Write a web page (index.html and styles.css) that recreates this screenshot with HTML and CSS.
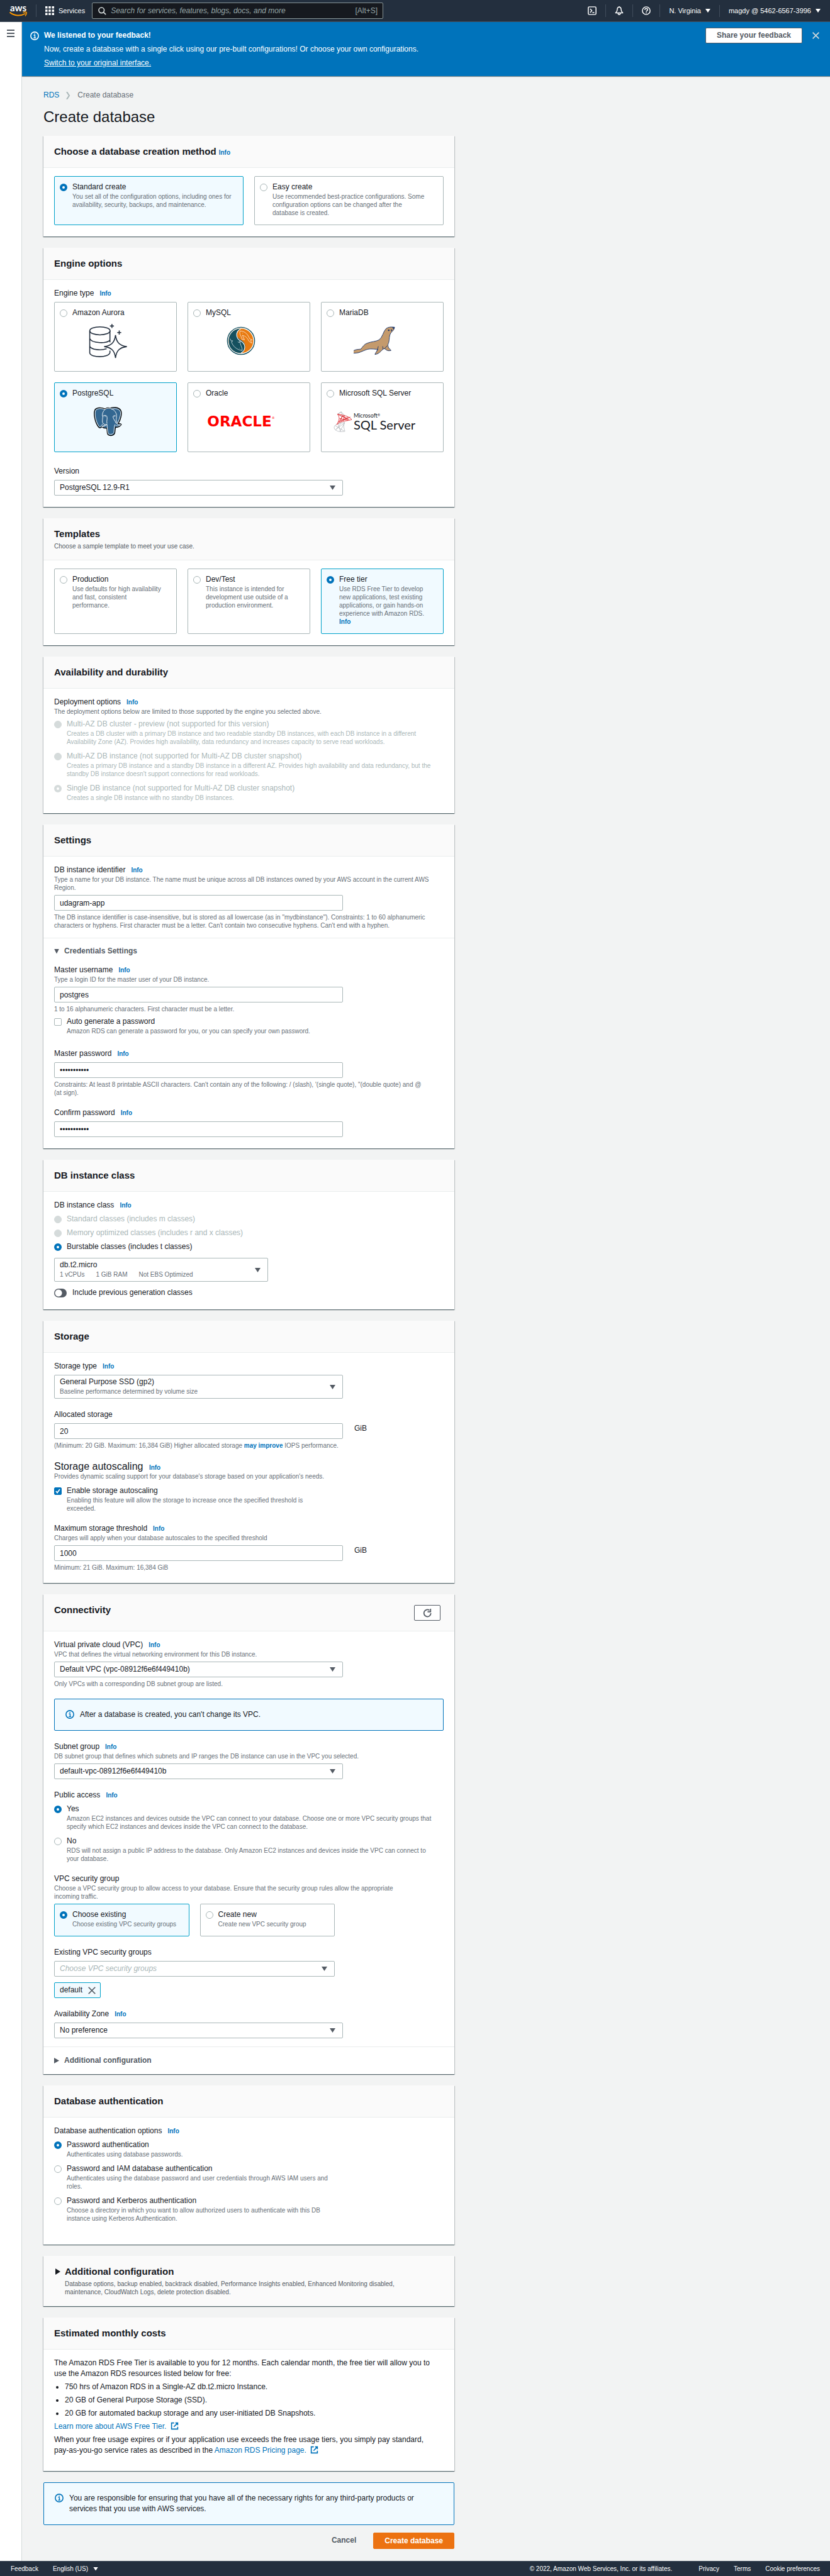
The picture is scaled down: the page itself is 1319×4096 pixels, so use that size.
FILE: index.html
```html
<!DOCTYPE html>
<html lang="en">
<head>
<meta charset="utf-8">
<meta name="viewport" content="width=device-width, initial-scale=1">
<title>Create database - RDS</title>
<link rel="stylesheet" href="styles.css">
</head>
<body>
<svg class="sprite" aria-hidden="true">
  <symbol id="i-info" viewBox="0 0 16 16"><circle cx="8" cy="8" r="7" fill="none" stroke="currentColor" stroke-width="1.8"/><path d="M6.2 7h2.3v4.6M6 11.8h4.4" fill="none" stroke="currentColor" stroke-width="1.6"/><path d="M7.2 3.7h1.8v1.7H7.2z" fill="currentColor"/></symbol>
  <symbol id="i-close" viewBox="0 0 16 16"><path d="M2 2l12 12M14 2L2 14" fill="none" stroke="currentColor" stroke-width="2"/></symbol>
  <symbol id="i-external" viewBox="0 0 16 16"><path d="M7 2H2v12h12V9.500M9.500 2H14v4.500M14 2L6.500 9.500" fill="none" stroke="currentColor" stroke-width="2"/></symbol>
</svg>

<header class="topnav">
  <a class="logo" href="#" aria-label="AWS home">
    <span class="logo-word">aws</span>
    <svg width="28" height="10" viewBox="0 0 56 20"><path d="M1 3c15 12 34 13 50 4" fill="none" stroke="#ff9900" stroke-width="4"/><path d="M43 3c5-1 9-1 11 0 1 3-1 8-4 12" fill="none" stroke="#ff9900" stroke-width="3"/></svg>
  </a>
  <button class="services" type="button">
    <svg width="14" height="14" viewBox="0 0 14 14" fill="#fff"><path d="M0 0h3.500v3.500H0zM5.200 0h3.500v3.500H5.200zM10.500 0H14v3.500h-3.500zM0 5.200h3.500v3.500H0zM5.200 5.200h3.500v3.500H5.200zM10.500 5.200H14v3.500h-3.500zM0 10.500h3.500V14H0zM5.200 10.500h3.500V14H5.200zM10.500 10.500H14V14h-3.500z"/></svg>
    Services
  </button>
  <label class="search">
    <svg width="13" height="13" viewBox="0 0 16 16" fill="none" stroke="#d5dbdb" stroke-width="2"><circle cx="6.500" cy="6.500" r="5.300"/><path d="M10.300 10.300L15 15"/></svg>
    <input type="search" aria-label="Search" placeholder="Search for services, features, blogs, docs, and more">
    <span class="shortcut">[Alt+S]</span>
  </label>
  <div class="nav-tools">
    <button type="button" class="nav-icon" aria-label="CloudShell"><svg width="14" height="14" viewBox="0 0 16 16" fill="none" stroke="#fff" stroke-width="1.700"><rect x="1" y="1" width="14" height="14" rx="2"/><path d="M4.500 4.500L7.500 8l-3 3.500M8.500 11.500h3.500"/></svg></button>
    <button type="button" class="nav-icon" aria-label="Notifications"><svg width="14" height="14" viewBox="0 0 16 16" fill="none" stroke="#fff" stroke-width="1.700" stroke-linejoin="round"><path d="M8 1.500c-2.500 0-3.500 2-3.500 4.500 0 3-1 4-3 6h13c-2-2-3-3-3-6C11.500 3.500 10.500 1.500 8 1.500zM8 0v1.500M6 12.500c0 3.500 4 3.500 4 0"/></svg></button>
    <button type="button" class="nav-icon" aria-label="Help"><svg width="14" height="14" viewBox="0 0 16 16" fill="none" stroke="#fff" stroke-width="1.700"><circle cx="8" cy="8" r="7"/><path d="M5.500 6.500c0-3.300 5-3.300 5 0C10.500 8 8 8 8 10M8 11.200v1.600"/></svg></button>
    <button type="button" class="nav-menu">N. Virginia <span class="caret"></span></button>
    <button type="button" class="nav-menu">magdy @ 5462-6567-3996 <span class="caret"></span></button>
  </div>
</header>

<div class="shell">
  <nav class="rail"><button type="button" class="burger" aria-label="Open navigation"><span></span><span></span><span></span></button></nav>
  <div class="content">
    <section class="flash">
      <svg class="flash-icon" width="14" height="14"><use href="#i-info"/></svg>
      <div class="flash-text">
        <strong>We listened to your feedback!</strong>
        <span>Now, create a database with a single click using our pre-built configurations! Or choose your own configurations.</span>
        <a href="#">Switch to your original interface.</a>
      </div>
      <button type="button" class="btn flash-btn">Share your feedback</button>
      <button type="button" class="flash-close" aria-label="Dismiss"><svg width="13" height="13"><use href="#i-close"/></svg></button>
    </section>

    <main class="page">
      <nav class="crumbs" aria-label="Breadcrumb">
        <a href="#">RDS</a>
        <svg width="7" height="12" viewBox="0 0 7 12" fill="none" stroke="#aab7b8" stroke-width="2"><path d="M1 0l4 6-4 6"/></svg>
        <span>Create database</span>
      </nav>
      <h1>Create database</h1>

      <form class="cards">
        <section class="card">
          <header class="card-head"><h2>Choose a database creation method <a class="info" href="#">Info</a></h2></header>
          <div class="card-body">
            <div class="tiles two">
              <label class="tile"><input type="radio" name="method" checked><span class="opt-text"><span>Standard create</span><small>You set all of the configuration options, including ones for availability, security, backups, and maintenance.</small></span></label>
              <label class="tile"><input type="radio" name="method"><span class="opt-text"><span>Easy create</span><small>Use recommended best-practice configurations. Some configuration options can be changed after the <span class="nowrap">database is created.</span></small></span></label>
            </div>
          </div>
        </section>

        <section class="card">
          <header class="card-head"><h2>Engine options</h2></header>
          <div class="card-body roomy">
            <div class="field" role="radiogroup" aria-labelledby="l-engine">
              <div class="label"><span id="l-engine">Engine type</span><a class="info" href="#">Info</a></div>
              <div class="tiles three control">
                <label class="tile"><input type="radio" name="engine"><span class="opt-text"><span>Amazon Aurora</span>
                  <span class="art"><svg width="61" height="56" viewBox="18 14 268 244" fill="none" stroke="#232f3e" stroke-width="7"><ellipse cx="96" cy="66" rx="71" ry="28"/><path d="M25 66v155c8 34 132 34 141-2v-15M166 66v80M25 120c12 36 126 36 141 10M25 174c12 26 80 30 118 17"/><path d="M205 96c-6 50-28 74-79 80 51 6 73 28 79 79 6-51 28-73 79-79-51-6-73-30-79-80z" fill="#fff"/><path d="M180 18v28M166 32h28M231 64v28M217 78h28"/></svg></span></span></label>
                <label class="tile"><input type="radio" name="engine"><span class="opt-text"><span>MySQL</span>
                  <span class="art"><svg width="46" height="46" viewBox="976 36 200 202" fill="none"><circle cx="1076" cy="137" r="95" fill="#fff" stroke="#15505f" stroke-width="6"/><circle cx="1076" cy="137" r="86" fill="#e97b11"/><path d="M1076 51c-115 2-115 170 0 172 24-8 37-42 22-72-14-24-48-25-50-55 0-25 14-38 28-45z" fill="#15505f"/><path d="M1074 52c-40 22-34 66-4 84 40 20 44 64 6 86" stroke="#fff" stroke-width="5"/><path d="M1084 128c-4-24-24-40-14-60 38 2 54 26 66 54l18 8-12 4 10 18c-12-2-22-12-28-26-12-20-26-24-38-28l14 32-12-4zM1000 122l8 16 10-2-8 10c10 28 30 44 54 54l20 4c2-20-8-30-12-46l-4-18-6 10-8-8" stroke="#fff" stroke-width="3"/><circle cx="1088" cy="84" r="2" fill="#fff"/><circle cx="1066" cy="188" r="2" fill="#fff"/></svg></span></span></label>
                <label class="tile"><input type="radio" name="engine"><span class="opt-text"><span>MariaDB</span>
                  <span class="art"><svg width="66" height="46" viewBox="178 38 290 200" fill="none" stroke="#17346b" stroke-width="4" stroke-linejoin="round"><path d="M181 205c14-8 30-8 46-9 14-14 22-34 46-42 30-12 60-10 84-24 24-18 28-60 48-78 16-12 38-12 58-9-2 18-14 28-26 40-12 18-8 42-14 66-6 14-8 22-2 34 4 8 10 12 18 22-16 4-24 2-34-4-4-4-10-10-16-8-22 12-26 34-62 40 2-14 16-22 20-36-26 0-56-8-84 4-24 8-46 22-66 22-14 0-28 4-36 0 4-6 10-6 16-10-4-4-8-4-8-8z" fill="#c49a6c"/><path d="M350 176c-4 14-2 22-12 34M380 176c2 8 4 14 2 20M412 172l-18 20"/><circle cx="423" cy="64" r="4" fill="#17346b"/><path d="M438 62c8-8 10 0 4 10M448 45l16-2-6 12z" fill="#17346b" stroke-width="3"/></svg></span></span></label>
                <label class="tile"><input type="radio" name="engine" checked><span class="opt-text"><span>PostgreSQL</span>
                  <span class="art"><svg width="46" height="47" viewBox="52 598 200 206" fill="none" stroke-linejoin="round"><path d="M135 612c-30-12-62-10-72 8-10 26 0 84 24 116 8 12 16 10 26 0 8 10 20 12 34 10 2 20 0 34 8 46 14 10 40 6 46-10 4-14 2-28 6-42 16 2 36-6 40-20-2-6-12-6-22-4 18-26 28-70 20-92-14-28-60-24-76-16-12-6-24-4-34 4z" fill="#336791" stroke="#0b0b0b" stroke-width="6"/><path d="M134 616c-26-10-58-8-66 8-8 24 2 78 22 106 10 12 14 4 22-6l10-10M134 616c16-14 44-10 60 4 18 14 22 32 20 50-4 20-2 30 4 44 6-8 26-46 24-78-6-30-44-28-64-22M120 662c8-8 22-6 26 0 8 16-4 34 2 52M120 662c-4 16-4 28-4 42 4 12 16 20 32 16 2 20 2 44 8 64 12 10 34 6 40-8 2-20 0-40 8-56M208 660c-8-2-20 0-18 8 2 18 16 26 20 44M134 616c-14 10-20 30-18 48M148 720c-12 8-20 16-36 16 0-8 20-4 24-16M208 726c10 8 24 4 36-4-10 2-24-2-30-8" stroke="#fff" stroke-width="4"/><circle cx="135" cy="665" r="3" fill="#fff"/><circle cx="200" cy="663" r="3" fill="#fff"/></svg></span></span></label>
                <label class="tile"><input type="radio" name="engine"><span class="opt-text"><span>Oracle</span><span class="art oracle" aria-hidden="true">ORACLE<sup>®</sup></span></span></label>
                <label class="tile"><input type="radio" name="engine"><span class="opt-text"><span>Microsoft SQL Server</span>
                  <span class="art mssql" aria-hidden="true"><svg width="30" height="33" viewBox="44 622 132 146" fill="none" stroke-linejoin="round"><path d="M98 626l-26 16 24 14 26-4zM122 700c-10 24-6 40 2 62-24 6-48 4-66-8-12-10-12-22-4-32 18-16 44-18 68-22zM54 722l66 40M58 752l64-50M76 706l16 58M100 702l-40 50M122 702l-32 60M72 642l26-16 8 26" stroke="#a9adb3" stroke-width="3"/><path d="M72 642c40 6 78 14 100 38-30 12-78 6-106 36 16-28 26-48 6-74zM72 642l80 38-48-26-10 38 68-30M86 672l60 14-38-32-28 44 66-34M120 650l-8 42" stroke="#e0353b" stroke-width="4"/></svg><span class="mssql-text"><span>Microsoft<sup>®</sup></span><b>SQL Server</b></span></span></span></label>
              </div>
            </div>
            <div class="field narrow">
              <div class="label"><label for="version">Version</label></div>
              <select id="version" class="control"><option>PostgreSQL 12.9-R1</option></select>
            </div>
          </div>
        </section>

        <section class="card">
          <header class="card-head"><h2>Templates</h2><p>Choose a sample template to meet your use case.</p></header>
          <div class="card-body">
            <div class="tiles three">
              <label class="tile"><input type="radio" name="template"><span class="opt-text"><span>Production</span><small>Use defaults for high availability and fast, consistent<br>performance.</small></span></label>
              <label class="tile"><input type="radio" name="template"><span class="opt-text"><span>Dev/Test</span><small>This instance is intended for development use outside of a production environment.</small></span></label>
              <label class="tile"><input type="radio" name="template" checked><span class="opt-text"><span>Free tier</span><small>Use RDS Free Tier to develop new applications, test existing applications, or gain hands-on experience with Amazon RDS.<br><a class="info" href="#">Info</a></small></span></label>
            </div>
          </div>
        </section>

        <section class="card">
          <header class="card-head"><h2>Availability and durability</h2></header>
          <div class="card-body">
            <div class="field" role="radiogroup" aria-labelledby="l-deploy">
              <div class="label"><span id="l-deploy">Deployment options</span><a class="info" href="#">Info</a></div>
              <p class="desc">The deployment options below are limited to those supported by the engine you selected above.</p>
              <div class="options described control">
                <label class="opt"><input type="radio" name="deploy" disabled><span class="opt-text"><span>Multi-AZ DB cluster - preview (not supported for this version)</span><small>Creates a DB cluster with a primary DB instance and two readable standby DB instances, with each DB instance in a different Availability Zone (AZ). Provides high availability, data redundancy and increases capacity to serve read workloads.</small></span></label>
                <label class="opt"><input type="radio" name="deploy" disabled><span class="opt-text"><span>Multi-AZ DB instance (not supported for Multi-AZ DB cluster snapshot)</span><small>Creates a primary DB instance and a standby DB instance in a different AZ. Provides high availability and data redundancy, but the standby DB instance doesn't support connections for read workloads.</small></span></label>
                <label class="opt"><input type="radio" name="deploy" disabled checked><span class="opt-text"><span>Single DB instance (not supported for Multi-AZ DB cluster snapshot)</span><small>Creates a single DB instance with no standby DB instances.</small></span></label>
              </div>
            </div>
          </div>
        </section>

        <section class="card">
          <header class="card-head"><h2>Settings</h2></header>
          <div class="card-body">
            <div class="field">
              <div class="label"><label for="identifier">DB instance identifier</label><a class="info" href="#">Info</a></div>
              <p class="desc">Type a name for your DB instance. The name must be unique across all DB instances owned by your AWS account in the current AWS Region.</p>
              <input id="identifier" class="control input" type="text" value="udagram-app">
              <p class="hint">The DB instance identifier is case-insensitive, but is stored as all lowercase (as in "mydbinstance"). Constraints: 1 to 60 alphanumeric characters or hyphens. First character must be a letter. Can't contain two consecutive hyphens. Can't end with a hyphen.</p>
            </div>
          </div>
          <details class="expander" open>
            <summary>Credentials Settings</summary>
            <div class="card-body">
              <div class="field">
                <div class="label"><label for="username">Master username</label><a class="info" href="#">Info</a></div>
                <p class="desc">Type a login ID for the master user of your DB instance.</p>
                <input id="username" class="control input" type="text" value="postgres">
                <p class="hint">1 to 16 alphanumeric characters. First character must be a letter.</p>
                <label class="opt control"><input type="checkbox"><span class="opt-text"><span>Auto generate a password</span><small>Amazon RDS can generate a password for you, or you can specify your own password.</small></span></label>
              </div>
              <div class="field lead">
                <div class="label"><label for="password">Master password</label><a class="info" href="#">Info</a></div>
                <input id="password" class="control input" type="password" value="udagram1234">
                <p class="hint">Constraints: At least 8 printable ASCII characters. Can't contain any of the following: / (slash), '(single quote), "(double quote) and @ (at&nbsp;sign).</p>
              </div>
              <div class="field">
                <div class="label"><label for="confirm">Confirm password</label><a class="info" href="#">Info</a></div>
                <input id="confirm" class="control input" type="password" value="udagram1234">
              </div>
            </div>
          </details>
        </section>

        <section class="card">
          <header class="card-head"><h2>DB instance class</h2></header>
          <div class="card-body">
            <div class="field" role="radiogroup" aria-labelledby="l-class">
              <div class="label"><span id="l-class">DB instance class</span><a class="info" href="#">Info</a></div>
              <div class="options control">
                <label class="opt"><input type="radio" name="class" disabled><span class="opt-text">Standard classes (includes m classes)</span></label>
                <label class="opt"><input type="radio" name="class" disabled><span class="opt-text">Memory optimized classes (includes r and x classes)</span></label>
                <label class="opt"><input type="radio" name="class" checked><span class="opt-text">Burstable classes (includes t classes)</span></label>
              </div>
              <div class="rich small-rich">
                <select aria-label="DB instance size"><option>db.t2.micro</option></select>
                <div class="rich-sub"><span>1 vCPUs</span><span>1 GiB RAM</span><span>Not EBS Optimized</span></div>
              </div>
              <label class="switch-row"><input type="checkbox" role="switch" class="switch">Include previous generation classes</label>
            </div>
          </div>
        </section>

        <section class="card">
          <header class="card-head"><h2>Storage</h2></header>
          <div class="card-body">
            <div class="field narrow">
              <div class="label"><label for="storage-type">Storage type</label><a class="info" href="#">Info</a></div>
              <div class="rich control">
                <select id="storage-type"><option>General Purpose SSD (gp2)</option></select>
                <div class="rich-sub"><span>Baseline performance determined by volume size</span></div>
              </div>
            </div>
            <div class="field">
              <div class="label"><label for="allocated">Allocated storage</label></div>
              <div class="with-unit control"><input id="allocated" class="input" type="text" inputmode="numeric" value="20"><span>GiB</span></div>
              <p class="hint">(Minimum: 20 GiB. Maximum: 16,384 GiB) Higher allocated storage <a href="#">may improve</a> IOPS performance.</p>
            </div>
            <div class="field">
              <h3>Storage autoscaling <a class="info" href="#">Info</a></h3>
              <p class="desc">Provides dynamic scaling support for your database's storage based on your application's needs.</p>
              <label class="opt autoscale"><input type="checkbox" checked><span class="opt-text"><span>Enable storage autoscaling</span><small>Enabling this feature will allow the storage to increase once the specified threshold is<br>exceeded.</small></span></label>
            </div>
            <div class="field">
              <div class="label"><label for="threshold">Maximum storage threshold</label><a class="info" href="#">Info</a></div>
              <p class="desc">Charges will apply when your database autoscales to the specified threshold</p>
              <div class="with-unit control"><input id="threshold" class="input" type="text" inputmode="numeric" value="1000"><span>GiB</span></div>
              <p class="hint">Minimum: 21 GiB. Maximum: 16,384 GiB</p>
            </div>
          </div>
        </section>

        <section class="card">
          <header class="card-head with-action"><h2>Connectivity</h2>
            <button type="button" class="btn icon-btn" aria-label="Refresh"><svg width="14" height="14" viewBox="0 0 16 16" fill="none" stroke="currentColor" stroke-width="2"><path d="M14.500 8A6.300 6.300 0 1 1 12 3M8.500 5.500H14V0"/></svg></button>
          </header>
          <div class="card-body">
            <div class="field narrow">
              <div class="label"><label for="vpc">Virtual private cloud (VPC)</label><a class="info" href="#">Info</a></div>
              <p class="desc">VPC that defines the virtual networking environment for this DB instance.</p>
              <select id="vpc" class="control"><option>Default VPC (vpc-08912f6e6f449410b)</option></select>
              <p class="hint">Only VPCs with a corresponding DB subnet group are listed.</p>
            </div>
            <div class="alert"><svg width="14" height="14"><use href="#i-info"/></svg><p>After a database is created, you can't change its VPC.</p></div>
            <div class="field">
              <div class="label"><label for="subnet">Subnet group</label><a class="info" href="#">Info</a></div>
              <p class="desc">DB subnet group that defines which subnets and IP ranges the DB instance can use in the VPC you selected.</p>
              <select id="subnet" class="control"><option>default-vpc-08912f6e6f449410b</option></select>
            </div>
            <div class="field" role="radiogroup" aria-labelledby="l-public">
              <div class="label"><span id="l-public">Public access</span><a class="info" href="#">Info</a></div>
              <div class="options described control">
                <label class="opt"><input type="radio" name="public" checked><span class="opt-text"><span>Yes</span><small>Amazon EC2 instances and devices outside the VPC can connect to your database. Choose one or more VPC security groups that specify which EC2 instances and devices inside the VPC can connect to the database.</small></span></label>
                <label class="opt"><input type="radio" name="public"><span class="opt-text"><span>No</span><small>RDS will not assign a public IP address to the database. Only Amazon EC2 instances and devices inside the VPC can connect to your&nbsp;database.</small></span></label>
              </div>
            </div>
            <div class="field" role="radiogroup" aria-labelledby="l-sg">
              <div class="label"><span id="l-sg">VPC security group</span></div>
              <p class="desc medium">Choose a VPC security group to allow access to your database. Ensure that the security group rules allow the appropriate incoming traffic.</p>
              <div class="tiles two control vpc-width">
                <label class="tile"><input type="radio" name="sg" checked><span class="opt-text"><span>Choose existing</span><small>Choose existing VPC security groups</small></span></label>
                <label class="tile"><input type="radio" name="sg"><span class="opt-text"><span>Create new</span><small>Create new VPC security group</small></span></label>
              </div>
            </div>
            <div class="field">
              <div class="label"><label for="groups">Existing VPC security groups</label></div>
              <select id="groups" class="control vpc-width placeholder"><option>Choose VPC security groups</option></select>
              <div class="token">default<button type="button" aria-label="Remove default"><svg width="14" height="14"><use href="#i-close"/></svg></button></div>
            </div>
            <div class="field">
              <div class="label"><label for="zone">Availability Zone</label><a class="info" href="#">Info</a></div>
              <select id="zone" class="control"><option>No preference</option></select>
            </div>
          </div>
          <details class="expander"><summary>Additional configuration</summary></details>
        </section>

        <section class="card">
          <header class="card-head"><h2>Database authentication</h2></header>
          <div class="card-body tall">
            <div class="field narrow" role="radiogroup" aria-labelledby="l-auth">
              <div class="label"><span id="l-auth">Database authentication options</span><a class="info" href="#">Info</a></div>
              <div class="options described control">
                <label class="opt"><input type="radio" name="auth" checked><span class="opt-text"><span>Password authentication</span><small>Authenticates using database passwords.</small></span></label>
                <label class="opt"><input type="radio" name="auth"><span class="opt-text"><span>Password and IAM database authentication</span><small>Authenticates using the database password and user credentials through AWS IAM users and roles.</small></span></label>
                <label class="opt"><input type="radio" name="auth"><span class="opt-text"><span>Password and Kerberos authentication</span><small>Choose a directory in which you want to allow authorized users to authenticate with this DB instance using Kerberos Authentication.</small></span></label>
              </div>
            </div>
          </div>
        </section>

        <details class="card card-expander">
          <summary class="card-head"><h2>Additional configuration</h2><p class="medium">Database options, backup enabled, backtrack disabled, Performance Insights enabled, Enhanced Monitoring disabled, maintenance, CloudWatch Logs, delete protection disabled.</p></summary>
        </details>

        <section class="card">
          <header class="card-head"><h2>Estimated monthly costs</h2></header>
          <div class="card-body costs">
            <p>The Amazon RDS Free Tier is available to you for 12 months. Each calendar month, the free tier will allow you to use the Amazon RDS resources listed below for free:</p>
            <ul>
              <li>750 hrs of Amazon RDS in a Single-AZ db.t2.micro Instance.</li>
              <li>20 GB of General Purpose Storage (SSD).</li>
              <li>20 GB for automated backup storage and any user-initiated DB Snapshots.</li>
            </ul>
            <p><a href="#">Learn more about AWS Free Tier. <svg width="13" height="13"><use href="#i-external"/></svg></a></p>
            <p>When your free usage expires or if your application use exceeds the free usage tiers, you simply pay standard, <span class="nowrap">pay-as-you-go</span> service rates as described in the <a href="#">Amazon RDS Pricing page. <svg width="13" height="13"><use href="#i-external"/></svg></a></p>
          </div>
        </section>

        <div class="alert"><svg width="14" height="14"><use href="#i-info"/></svg><p>You are responsible for ensuring that you have all of the necessary rights for any third-party products or services that you use with AWS services.</p></div>

        <div class="actions">
          <button type="button" class="btn plain">Cancel</button>
          <button type="submit" class="btn primary">Create database</button>
        </div>
      </form>
    </main>
  </div>
</div>

<footer class="footer">
  <a href="#">Feedback</a>
  <button type="button">English (US) <span class="caret"></span></button>
  <div class="footer-right">
    <span>© 2022, Amazon Web Services, Inc. or its affiliates.</span>
    <a href="#">Privacy</a>
    <a href="#">Terms</a>
    <a href="#">Cookie preferences</a>
  </div>
</footer>
</body>
</html>
```
FILE: styles.css
```css
:root {
  --text: #16191f;
  --muted: #687078;
  --dim: #545b64;
  --link: #0073bb;
  --line: #aab7b8;
  --accent: #00a1c9;
  --tint: #f1faff;
  --nav: #232f3e;
}

* { box-sizing: border-box; }

body {
  margin: 0;
  min-height: 100vh;
  display: flex;
  flex-direction: column;
  background: #f2f3f3;
  color: var(--text);
  font: 12px/17px "Liberation Sans", Arial, sans-serif;
}

h1, h2, h3, p, ul { margin: 0; padding: 0; }
button, input, select { font: inherit; color: inherit; margin: 0; }
button { background: none; border: 0; padding: 0; cursor: pointer; }
a { color: var(--link); text-decoration: none; }
svg { flex: none; }
.sprite { display: none; }
.nowrap { white-space: nowrap; }

/* Top navigation */
.topnav {
  display: flex;
  align-items: center;
  height: 35px;
  padding: 0 15px 0 14px;
  background: var(--nav);
  border-bottom: 1px solid #414d5c;
  color: #fff;
}
.logo { display: flex; flex-direction: column; align-items: center; width: 30px; color: #fff; }
.logo-word { font: 700 15px/12px Lato, sans-serif; }
.services {
  display: flex;
  align-items: center;
  gap: 7px;
  height: 20px;
  margin-left: 13px;
  padding-left: 14px;
  border-left: 1px solid #414d5c;
  font-size: 11px;
}
.search {
  display: flex;
  align-items: center;
  gap: 7px;
  width: 463px;
  height: 26px;
  margin-left: 11px;
  padding: 0 8px 0 9px;
  background: #16191f;
  border: 1px solid #879596;
  border-radius: 2px;
  color: #95a5a6;
}
.search input { flex: 1; min-width: 0; padding: 0; border: 0; background: none; outline: 0; }
.search input::placeholder { color: #95a5a6; font-style: italic; }
.nav-tools { display: flex; align-items: center; margin-left: auto; font-size: 11px; }
.nav-icon { display: flex; padding: 3px 14px; border-right: 1px solid #414d5c; }
.nav-menu { display: flex; align-items: center; gap: 7px; padding: 1px 14px; border-right: 1px solid #414d5c; }
.nav-menu:last-child { border: 0; padding-right: 0; }
.caret { width: 8px; height: 6px; background: currentColor; clip-path: polygon(0 0, 100% 0, 50% 100%); }

/* Page frame */
.shell { display: flex; flex: 1; }
.rail { flex: none; width: 35px; background: #fff; border-right: 1px solid #d5dbdb; }
.burger { display: grid; gap: 3px; width: 12px; margin: 12px 11px; }
.burger span { height: 2px; background: var(--dim); }
.content { flex: 1; min-width: 0; }

.flash {
  display: flex;
  align-items: flex-start;
  padding: 13px 16px 12px 13px;
  background: var(--link);
  box-shadow: 0 1px 1px rgba(0, 28, 36, .5);
  color: #fff;
}
.flash-icon { margin: 2px 8px 0 0; }
.flash-text { display: grid; gap: 5px; flex: 1; justify-items: start; }
.flash-text a { color: #fff; text-decoration: underline; }
.flash-close { display: flex; margin: 2px 0 0 15px; color: #d5dbdb; }

.btn {
  height: 25px;
  padding: 0 17px;
  background: #fff;
  border: 1px solid var(--dim);
  border-radius: 2px;
  color: var(--dim);
  font-weight: 700;
}
.flash-btn { margin-top: -4px; }
.icon-btn { display: flex; align-items: center; justify-content: center; width: 42px; padding: 0; }
.btn.plain { background: none; border-color: transparent; }
.btn.primary { height: 26px; background: #ec7211; border-color: #ec7211; color: #fff; }

.page { max-width: 687px; padding: 22px 0 18px 34px; }
.crumbs { display: flex; align-items: center; gap: 11px; color: var(--muted); }
h1 { margin: 11px 0 15px; font-size: 24px; line-height: 30px; font-weight: 400; }

/* Cards */
.cards { display: flex; flex-direction: column; gap: 18px; }
.card {
  background: #fff;
  box-shadow: 0 1px 1px 0 rgba(0, 28, 36, .5), 1px 1px 1px 0 rgba(0, 28, 36, .15), -1px 1px 1px 0 rgba(0, 28, 36, .15);
}
.card-head { padding: 15px 17px; background: #fafafa; border-bottom: 1px solid #eaeded; }
.card-head h2 { font-size: 15px; line-height: 20px; font-weight: 700; }
.card-head p { margin-top: 3px; font-size: 10px; line-height: 13px; color: var(--dim); }
.with-action { display: flex; justify-content: space-between; padding-right: 22px; padding-bottom: 16px; }
.with-action .btn { margin-top: 2px; }
.card-body { display: flex; flex-direction: column; gap: 17px; padding: 13px 17px 18px; }
.roomy { gap: 22px; }
.tall { padding-bottom: 35px; }
h3 { font-size: 16px; line-height: 19px; font-weight: 400; }
h3 .info { margin-left: 5px; }

/* Fields */
.label { display: flex; align-items: baseline; gap: 9px; }
.info { font-size: 10px; line-height: 13px; font-weight: 700; }
.desc, .hint, small { display: block; font-size: 10px; line-height: 13px; color: var(--muted); }
.hint { margin-top: 4px; }
.hint a { font-weight: 700; }
.control { margin-top: 5px; }
.narrow { max-width: 459px; }
.medium { max-width: 550px; }
.vpc-width { max-width: 446px; }
.lead { margin-top: 4px; }

.input, select {
  display: block;
  width: 100%;
  height: 25px;
  padding: 0 8px;
  background-color: #fff;
  border: 1px solid var(--line);
  border-radius: 2px;
}
.field > .input, .field > select { max-width: 459px; }
.field > .vpc-width { max-width: 446px; }
select, .rich {
  appearance: none;
  background-image: url("data:image/svg+xml,%3Csvg xmlns='http://www.w3.org/2000/svg' width='9' height='7'%3E%3Cpath d='M0 0h9L4.500 7z' fill='%23545b64'/%3E%3C/svg%3E");
  background-repeat: no-repeat;
  background-position: right 11px center;
}
.placeholder { color: var(--line); font-style: italic; }
.rich {
  padding: 2px 8px 4px;
  background-color: #fff;
  border: 1px solid var(--line);
  border-radius: 2px;
}
.rich select { height: 17px; padding: 0; background: none; border: 0; }
.rich-sub { display: flex; gap: 18px; font-size: 10px; line-height: 13px; color: var(--muted); }
.small-rich { max-width: 340px; margin-top: 9px; }
.with-unit { display: flex; gap: 18px; }
.with-unit .input { max-width: 459px; }

/* Radios, tick boxes and tiles */
.options { display: grid; gap: 5px; }
.options.described { gap: 8px; }
.opt, .tile { display: flex; gap: 8px; }
.opt-text { display: block; flex: 1; }
.opt-text > span { display: block; }
.opt input, .tile input {
  appearance: none;
  flex: none;
  width: 12px;
  height: 12px;
  margin-top: 3px;
  background: #fff;
  border: 1px solid var(--line);
  border-radius: 50%;
}
.opt input[type="checkbox"] { border-radius: 2px; }
.opt input[type="radio"]:checked, .tile input:checked { border: 4px solid var(--link); }
.opt input[type="checkbox"]:checked {
  border-color: var(--link);
  background: var(--link) url("data:image/svg+xml,%3Csvg xmlns='http://www.w3.org/2000/svg' width='10' height='10'%3E%3Cpath d='M2 5l2 2.500L8 2' fill='none' stroke='white' stroke-width='1.700'/%3E%3C/svg%3E") center no-repeat;
}
.opt input:disabled { background: #d5dbdb; border-color: #d5dbdb; }
.opt input[type="radio"]:checked:disabled { background: #fff; border-color: #d5dbdb; }
.opt:has(input:disabled), .opt:has(input:disabled) small { color: var(--line); }
.autoscale { max-width: 459px; margin-top: 8px; }

.tiles { display: grid; gap: 17px; }
.two { grid-template-columns: 1fr 1fr; }
.three { grid-template-columns: 1fr 1fr 1fr; }
.tile { padding: 8px 17px 12px 8px; background: #fff; border: 1px solid var(--line); border-radius: 2px; }
.tile:has(input:checked) { background: var(--tint); border-color: var(--accent); }
.opt-text > .art { display: flex; align-items: center; justify-content: center; width: 112px; height: 72px; }
.opt-text > .oracle { font: 700 23px/23px "DejaVu Sans", sans-serif; color: #f00; }
.oracle sup, .mssql sup { align-self: flex-start; font-size: 5px; line-height: 8px; vertical-align: top; }
.oracle sup { margin-top: 26px; font-weight: 400; }
.mssql { gap: 2px; white-space: nowrap; }
.mssql-text { display: block; font-family: Lato, sans-serif; }
.mssql-text span { display: block; font-size: 9px; line-height: 9px; }
.mssql-text b { display: block; font-size: 20px; line-height: 20px; font-weight: 400; }

.switch-row { display: flex; align-items: center; gap: 9px; margin-top: 9px; }
.switch {
  appearance: none;
  width: 20px;
  height: 14px;
  border-radius: 7px;
  background: radial-gradient(circle at 7px 7px, #fff 5px, var(--dim) 6px);
}

/* Expanders */
.expander { border-top: 1px solid #eaeded; }
.card-body:has(+ .expander) { padding-bottom: 13px; }
.expander summary {
  display: flex;
  align-items: center;
  gap: 8px;
  padding: 13px 17px;
  color: var(--dim);
  font-weight: 700;
  list-style: none;
}
.expander summary::before { content: ""; width: 8px; height: 9px; background: currentColor; clip-path: polygon(0 0, 100% 50%, 0 100%); }
.expander[open] summary { padding-top: 12px; padding-bottom: 0; }
.expander[open] summary::before { height: 8px; clip-path: polygon(0 0, 100% 0, 50% 100%); }
.card-expander summary { display: grid; grid-template-columns: 8px 1fr; column-gap: 9px; align-items: center; list-style: none; }
.card-expander summary::before { content: ""; width: 8px; height: 10px; margin-left: 2px; background: currentColor; clip-path: polygon(0 0, 100% 50%, 0 100%); }
.card-expander summary p { grid-column: 2; }

.alert {
  display: flex;
  gap: 9px;
  padding: 16px 17px;
  background: var(--tint);
  border: 1px solid var(--link);
  border-radius: 2px;
}
.alert svg { margin-top: 1px; color: var(--link); }

.token {
  display: flex;
  align-items: center;
  gap: 8px;
  width: fit-content;
  height: 25px;
  margin-top: 9px;
  padding: 0 6px 0 8px;
  background: var(--tint);
  border: 1px solid var(--accent);
  border-radius: 2px;
}
.token button { display: flex; color: var(--dim); }

.costs { gap: 4px; padding-bottom: 24px; }
.costs ul { display: grid; gap: 4px; padding-left: 17px; }
.costs svg { margin-left: 3px; vertical-align: -2px; }

.actions { display: flex; justify-content: flex-end; gap: 9px; margin-top: -6px; }

.footer {
  display: flex;
  align-items: center;
  gap: 23px;
  height: 24px;
  padding: 0 16px 0 17px;
  background: var(--nav);
  border-top: 1px solid #414d5c;
  color: #fff;
  font-size: 10px;
}
.footer a { color: #fff; }
.footer button { display: flex; align-items: center; gap: 8px; }
.footer-right { display: flex; gap: 23px; margin-left: auto; }
.footer-right > span { margin-right: 19px; }
```
